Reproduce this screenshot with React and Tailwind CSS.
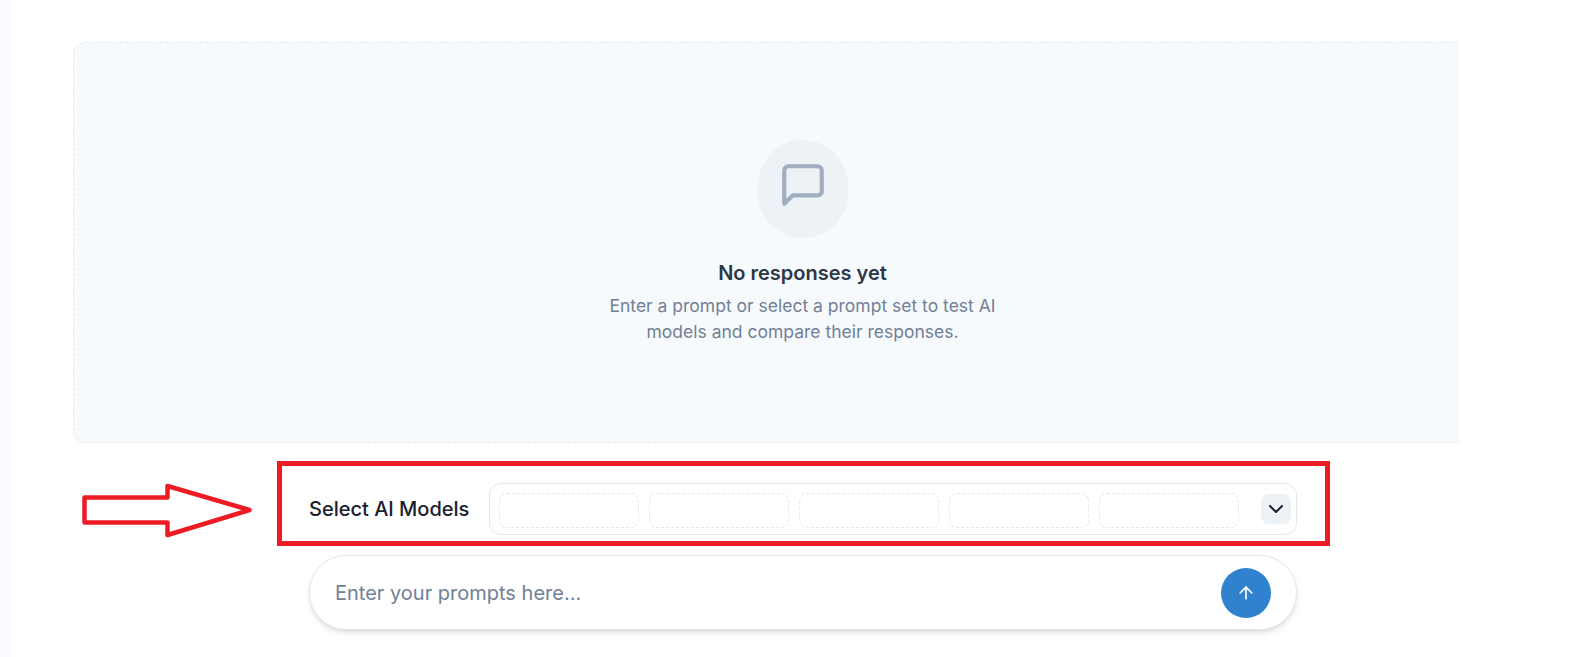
import { ArrowUp, ChevronDown } from 'lucide-react';
import { FiMessageSquare } from 'react-icons/fi';

const slots = [0, 1, 2, 3, 4];

const App = () => {
  return (
    <div className="flex h-[657px] overflow-hidden bg-white font-['Inter',sans-serif]">
      <div className="w-[13px] shrink-0 bg-[#fbfcff]" />

      <div className="relative flex-1 pl-[60px] pt-[42px]">
        {/* Empty state, cut off on the right side of the screenshot */}
        <div className="w-[1386px] overflow-hidden">
          <div className="flex h-[401px] w-[1459px] flex-col items-center rounded-xl border border-dashed border-[#e2e8f0] bg-[#f7fafc] pt-[97px]">
            <div className="flex h-[98px] w-[90px] items-center justify-center rounded-full bg-[#edf2f7] pb-2">
              <FiMessageSquare className="h-[50px] w-[50px] text-[#a0aec0]" />
            </div>
            <h3 className="mt-[22px] text-xl leading-[26px] font-semibold text-[#2d3748]">No responses yet</h3>
            <p className="mt-[7px] w-[400px] text-center text-[17.5px] leading-[26px] text-[#718096]">
              Enter a prompt or select a prompt set to test AI models and compare their responses.
            </p>
          </div>
        </div>

        {/* Red annotation around the model picker */}
        <div className="mt-[18px] ml-[204px] flex h-[85px] w-[1053px] items-start border-[5px] border-[#ed1c24] pt-[17px] pl-[27px]">
          <span className="flex h-[52px] w-[180px] shrink-0 items-center text-xl font-medium text-[#1a202c]">Select AI Models</span>
          <div className="flex h-[52px] w-[808px] items-center rounded-xl border border-[#e2e8f0] pr-[5px] pl-[9px]">
            <div className="mt-[2px] flex gap-[10px]">
              {slots.map((slot) => (
                <div key={slot} className="h-[35px] w-[140px] rounded-lg border border-dashed border-[#e2e8f0]" />
              ))}
            </div>
            <button className="ml-auto flex h-[30px] w-[30px] items-center justify-center rounded-lg bg-[#edf2f7] text-[#1a202c]">
              <ChevronDown className="h-6 w-6" />
            </button>
          </div>
        </div>

        {/* Prompt input */}
        <div className="mt-[9px] ml-[236px] flex h-[75px] w-[988px] items-center justify-between rounded-[37px] border border-[#e2e8f0] bg-white pr-[25px] pl-[25px] shadow-md">
          <span className="text-xl text-[#718096]">Enter your prompts here...</span>
          <button className="flex h-[50px] w-[50px] items-center justify-center rounded-full bg-[#3182ce] text-white">
            <ArrowUp className="h-5 w-5" />
          </button>
        </div>

        {/* Hand drawn arrow on top of the screenshot */}
        <svg className="absolute top-[483px] left-[68px]" width="174" height="56" viewBox="0 0 174 56" fill="none">
          <path
            d="M3.5 14.5H86.5V3L168.5 27L86.5 52V39.5H3.5V14.5Z"
            stroke="#ed1c24"
            strokeWidth="4.5"
            strokeLinejoin="round"
          />
        </svg>
      </div>
    </div>
  );
};

export default App;
